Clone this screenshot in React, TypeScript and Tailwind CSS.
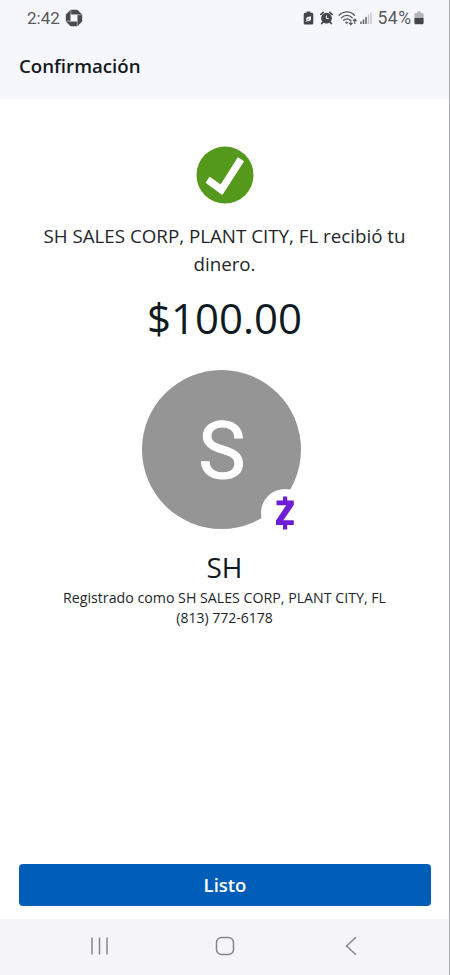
const StatusBar = () => (
  <div className="flex h-9 items-center pl-[27px] pr-[25px] text-[#58595d] font-['Roboto',sans-serif]">
    <span className="text-[17px] leading-none">2:42</span>
    <svg className="ml-[5px]" width="18" height="18" viewBox="0 0 18 18">
      <path
        fill="#4a4b4f"
        d="M5.6.8h6.8l4.8 4.8v6.8l-4.8 4.8H5.6L.8 12.4V5.6z"
      />
      <rect x="5.500" y="5.500" width="7" height="7" fill="#f6f7fc" />
      <path
        d="M5.800 .8V6M17.2 5.800H12M12.200 17.2V12M.8 12.200H6"
        stroke="#f6f7fc"
        strokeWidth="0.5"
      />
    </svg>

    <div className="ml-auto flex items-center">
      <svg width="11" height="14" viewBox="0 0 11 14">
        <path
          fill="#444549"
          d="M3.6.4h3.8v1.4h1.3c.9 0 1.6.6 1.6 1.5v8.6c0 .9-.7 1.6-1.6 1.6H2.3c-.9 0-1.6-.7-1.6-1.6V3.3c0-.9.7-1.5 1.6-1.5h1.3z"
        />
        <path
          fill="#f6f7fc"
          d="M8 5.2v2.6c0 1.6-1 2.5-2.3 2.5-.6 0-1.1-.1-1.5-.4l-1.1 1-.6-.6 1-1c-1-2.1.3-3.4 2-3.6 1-.1 1.900-.2 2.500-.5z"
        />
        <path d="M3.6 9.600l2.700-2.200" stroke="#444549" strokeWidth="0.6" />
      </svg>
      <svg className="ml-[6px]" width="13" height="14" viewBox="0 0 13 14">
        <circle cx="6.500" cy="7.200" r="5.400" fill="#444549" />
        <path
          d="M.9 3.400l2.400-2.100M12.100 3.400L9.700 1.300M2.900 11l-1.200 1.600M10.100 11l1.200 1.600"
          stroke="#444549"
          strokeWidth="1.600"
          strokeLinecap="round"
        />
        <path
          d="M6.400 4.500v3h2.300"
          stroke="#f6f7fc"
          strokeWidth="1"
          fill="none"
        />
      </svg>
      <svg className="ml-[5px]" width="20" height="16" viewBox="0 0 20 16">
        <g fill="none" stroke="#55565a" strokeWidth="1.300" strokeLinecap="round">
          <path d="M1.200 5.300C5.400.8 12.400.8 16.400 5.300" />
          <path d="M3.400 7.900c3.100-3.300 7.800-3.300 10.800-.2" />
          <path d="M5.700 10.300c1.700-1.800 4.300-1.800 6-.3" />
        </g>
        <circle cx="8.600" cy="12.600" r="1.200" fill="#55565a" />
        <g fill="none" stroke="#55565a" strokeWidth="1.100">
          <path d="M12.800 9.500v5M11 12.800l1.800 1.900 1.800-1.900" />
          <path d="M16.800 14V9.300M15 11l1.800-1.900L18.600 11" />
        </g>
      </svg>
      <svg className="ml-[2px]" width="12" height="13" viewBox="0 0 12 13">
        <path d="M1 9.500V12M3.500 7.500V12M6 5V12" stroke="#55565a" strokeWidth="1.400" />
        <path d="M8.500 2.500V12M11 .5V12" stroke="#c3c4c9" strokeWidth="1.400" />
      </svg>
      <span className="ml-[6px] pt-[2px] text-[17.500px] leading-none tracking-[0.5px]">
        54%
      </span>
      <svg className="ml-[2.500px]" width="10" height="14" viewBox="0 0 10 14">
        <path
          fill="#b4b5b9"
          d="M3.200.6h3.600v1.300h1.400c.8 0 1.400.6 1.400 1.400V7H.4V3.300c0-.8.6-1.400 1.400-1.400h1.400z"
        />
        <path fill="#444549" d="M.4 7h9.200v4.800c0 .9-.6 1.500-1.400 1.500H1.800c-.8 0-1.400-.6-1.400-1.500z" />
      </svg>
    </div>
  </div>
);

const CheckBadge = () => (
  <svg width="58" height="58" viewBox="0 0 58 58">
    <circle cx="29" cy="29" r="28.500" fill="#54991c" />
    <path
      d="M10.300 36.600L13.800 31.500L24.800 39.200L42 12L47.300 15.400L26.200 48.200z"
      fill="#fff"
      stroke="#fff"
      strokeWidth="1.200"
      strokeLinejoin="round"
    />
  </svg>
);

const Avatar = () => (
  <div className="relative flex h-[159px] w-[159px] items-center justify-center rounded-full bg-[#959595]">
    <span className="pt-[3px] pl-[2px] font-['Roboto',sans-serif] text-[79px] leading-none text-white [-webkit-text-stroke:1.2px_white]">
      S
    </span>
    <div className="absolute left-[119px] top-[119px] flex h-[48px] w-[48px] items-center justify-center rounded-full bg-white">
      <svg width="20" height="34" viewBox="0 0 20 34">
        <path
          fill="#6d1ed4"
          d="M8 .5h4.200v4.100h6.600v4.400L8.400 24.200h10.400v4.700h-6.600v4.600H8v-4.600H1v-4.300L11.200 9.300H1.500V4.600H8z"
        />
      </svg>
    </div>
  </div>
);

const NavBar = () => (
  <div className="flex h-14 items-center justify-between bg-[#f5f5f7] pb-[3px] pl-[90px] pr-[92px]">
    <svg width="19" height="20" viewBox="0 0 19 20">
      <path d="M2 1.500v17M9.500 1.500v17M17 1.500v17" stroke="#85868a" strokeWidth="1.500" />
    </svg>
    <svg className="mr-[5px]" width="20" height="20" viewBox="0 0 20 20">
      <rect
        x="1.500"
        y="1.500"
        width="17"
        height="17"
        rx="5"
        fill="none"
        stroke="#85868a"
        strokeWidth="1.500"
      />
    </svg>
    <svg width="12" height="20" viewBox="0 0 12 20">
      <path d="M11 1.200L1.500 10l9.500 8.800" fill="none" stroke="#85868a" strokeWidth="1.500" />
    </svg>
  </div>
);

const App = () => {
  return (
    <div className="flex h-[975px] w-[450px] flex-col border-r border-[#a9aaae] bg-white font-['Open_Sans',sans-serif] text-[#22262b]">
      <header className="h-[99px] bg-[#f6f7fc]">
        <StatusBar />
        <h1 className="pl-[19px] pt-[16px] text-[18.700px] leading-7 font-semibold text-[#15181c]">
          Confirmación
        </h1>
      </header>

      <main className="flex grow flex-col items-center pt-[47px] text-center">
        <CheckBadge />
        <p className="mt-[18px] w-[390px] text-[18.750px] leading-7">
          SH SALES CORP, PLANT CITY, FL recibió tu dinero.
        </p>
        <p className="mt-[10px] text-[42px] leading-[60px] text-[#0f1a22]">
          $100.00
        </p>
        <div className="mt-[22px] mr-[7px]">
          <Avatar />
        </div>
        <h2 className="mt-[19px] text-[28px] leading-[38px] text-[#0f1a22]">SH</h2>
        <p className="mt-[1px] text-[14.200px] leading-[21px]">
          Registrado como SH SALES CORP, PLANT CITY, FL
        </p>
        <p className="-mt-[1px] text-[14px] leading-[21px]">
          (813) 772-6178
        </p>
      </main>

      <div className="pb-[13px] pl-[19px] pr-[18px]">
        <button className="h-[42px] w-full rounded-[4px] bg-[#005eb8] text-[18.500px] font-semibold text-white">
          Listo
        </button>
      </div>
      <NavBar />
    </div>
  );
};

export default App;
